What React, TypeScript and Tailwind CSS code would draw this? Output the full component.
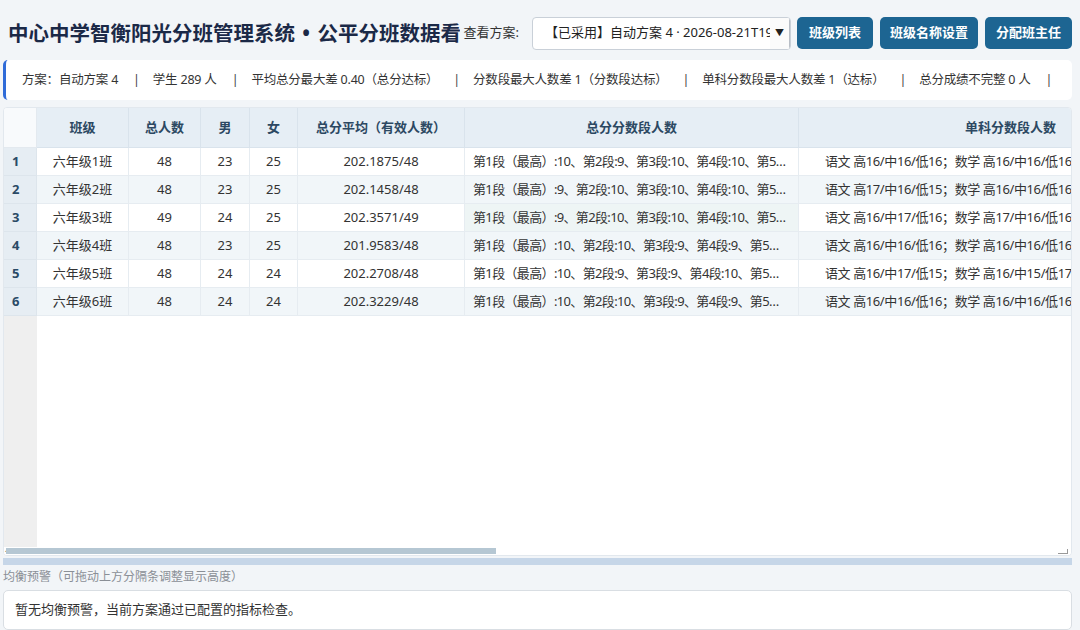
import React from "react";

const rows = [
  ["六年级1班", "48", "23", "25", "202.1875/48", "第1段（最高）:10、第2段:9、第3段:10、第4段:10、第5段:9", "语文 高16/中16/低16；数学 高16/中16/低16"],
  ["六年级2班", "48", "23", "25", "202.1458/48", "第1段（最高）:9、第2段:10、第3段:10、第4段:10、第5段:9", "语文 高17/中16/低15；数学 高16/中16/低16"],
  ["六年级3班", "49", "24", "25", "202.3571/49", "第1段（最高）:9、第2段:10、第3段:10、第4段:10、第5段:10", "语文 高16/中17/低16；数学 高17/中16/低16"],
  ["六年级4班", "48", "23", "25", "201.9583/48", "第1段（最高）:10、第2段:10、第3段:9、第4段:9、第5段:10", "语文 高16/中16/低16；数学 高16/中16/低16"],
  ["六年级5班", "48", "24", "24", "202.2708/48", "第1段（最高）:10、第2段:9、第3段:9、第4段:10、第5段:10", "语文 高16/中17/低15；数学 高16/中15/低17"],
  ["六年级6班", "48", "24", "24", "202.3229/48", "第1段（最高）:10、第2段:10、第3段:9、第4段:9、第5段:10", "语文 高16/中16/低16；数学 高16/中16/低16"],
];

const widths = ["w-[92px]", "w-[72px]", "w-[49px]", "w-[48px]", "w-[167px]", "w-[334px]", "w-[424px]"];
const heads = ["班级", "总人数", "男", "女", "总分平均（有效人数）", "总分分数段人数", "单科分数段人数"];

function Sep() {
  return <span className="ml-[15px] mr-[13px] text-[#444]">|</span>;
}

export default function App() {
  const font = { fontFamily: '"Noto Sans", "Noto Sans CJK SC", sans-serif' };
  return (
    <div className="w-[1080px] h-[630px] overflow-hidden bg-[#f2f5f8] pl-[3px] pr-[8px] flex flex-col" style={font}>
      {/* Header */}
      <div className="flex items-center h-[50px] pt-[17px] pb-[1px] shrink-0">
        <div className="flex-1 min-w-0 overflow-hidden whitespace-nowrap pl-[5px] text-[20.5px] font-bold text-[#1b2947] leading-[32px]">
          中心中学智衡阳光分班管理系统 <span className="mx-[2px]">•</span> 公平分班数据看板
        </div>
        <div className="ml-[4px] text-[13px] text-[#333] whitespace-nowrap">查看方案:</div>
        <div className="ml-[13px] w-[259px] h-[33px] bg-white border border-[#c9d0d8] rounded-[4px] flex items-center pl-[12px] text-[13px] text-[#222] whitespace-nowrap overflow-hidden">
          <span className="flex-1 overflow-hidden">【已采用】自动方案 4 · 2026-08-21T19:59</span>
          <span className="w-[20px] h-full flex items-center justify-center text-[9px] text-[#222] border-r border-[#b8bec6] bg-[#fbfbfb]">▼</span>
        </div>
        <button className="ml-[6px] h-[32px] w-[76px] rounded-[5px] bg-[#1d6592] text-white text-[13px] font-bold">班级列表</button>
        <button className="ml-[7px] h-[32px] w-[98px] rounded-[5px] bg-[#1d6592] text-white text-[13px] font-bold">班级名称设置</button>
        <button className="ml-[7px] h-[32px] w-[87px] rounded-[5px] bg-[#1d6592] text-white text-[13px] font-bold">分配班主任</button>
      </div>

      {/* Stats bar */}
      <div className="mt-[10px] h-[40px] shrink-0 bg-white border-l-[3px] border-[#2f6bd8] rounded-[5px] flex items-center pl-[16px] text-[12.5px] tracking-[-0.2px] text-[#333] whitespace-nowrap overflow-hidden">
        <span>方案：自动方案 4</span>
        <Sep />
        <span>学生 289 人</span>
        <Sep />
        <span>平均总分最大差 0.40（总分达标）</span>
        <Sep />
        <span>分数段最大人数差 1（分数段达标）</span>
        <Sep />
        <span>单科分数段最大人数差 1（达标）</span>
        <Sep />
        <span>总分成绩不完整 0 人</span>
        <Sep />
      </div>

      {/* Table */}
      <div className="mt-[7px] h-[449px] shrink-0 bg-white border border-[#e2e8ee] rounded-[4px] relative overflow-hidden flex flex-col">
        <div className="flex-1 flex overflow-hidden">
          {/* row header column */}
          <div className="w-[33px] shrink-0 flex flex-col">
            <div className="h-[40px] bg-[#f8fafc] border-b border-r border-[#e3e9ef]" />
            {rows.map((_, i) => (
              <div key={i} className="h-[28px] bg-[#e6edf3] border-b border-r border-[#dde5ec] flex items-center pl-[8px] text-[13px] font-bold text-[#2a4a66]">
                {i + 1}
              </div>
            ))}
            <div className="flex-1 bg-[#efefef]" />
          </div>
          <div className="flex-1 overflow-hidden">
            <div className="w-[1200px]">
              <div className="flex h-[40px] bg-[#e6eef5]">
                {heads.map((h, j) => (
                  <div key={j} className={`${widths[j]} shrink-0 border-b border-r border-[#d9e3ec] flex items-center justify-center text-[13px] font-bold text-[#2c4862] whitespace-nowrap`}>
                    {h}
                  </div>
                ))}
              </div>
              {rows.map((r, i) => (
                <div key={i} className={`flex h-[28px] ${i % 2 === 1 ? "bg-[#f1f6f9]" : "bg-white"}`}>
                  {r.map((c, j) => (
                    <div
                      key={j}
                      className={`${widths[j]} shrink-0 border-b border-r border-[#e6ecf1] h-[28px] leading-[27px] text-[13px] text-[#333] whitespace-nowrap overflow-hidden ${
                        j === 6 ? "pl-[26px] text-left tracking-[-0.4px]" : j === 5 ? "px-[8px] text-center truncate tracking-[-0.65px]" : "text-center px-[4px]"
                      } ${i === 2 && j === 5 ? "bg-[#eef5f5]" : ""}`}
                    >
                      {c}
                    </div>
                  ))}
                </div>
              ))}
            </div>
          </div>
        </div>
        {/* scrollbar */}
        <div className="h-[8px] shrink-0 relative bg-white">
          <div className="absolute left-[1px] top-[1px] text-[7px] leading-[6px] text-[#555]">◂</div>
          <div className="absolute left-[2px] top-[1px] h-[6px] w-[490px] bg-[#b5c7d3]" />
          <div className="absolute right-[3px] bottom-[1px] w-[10px] h-[5px] border-r border-b border-[#999]" />
        </div>
      </div>

      {/* splitter */}
      <div className="mt-[2px] h-[7px] shrink-0 bg-[#c6d6e8]" />

      <div className="mt-[4px] text-[12px] text-[#8a8f96] leading-[16px]">均衡预警（可拖动上方分隔条调整显示高度）</div>

      <div className="mt-[5px] flex-1 bg-white border border-[#d9dee3] rounded-[5px] pl-[11px] pt-[9px] text-[13px] text-[#333]">
        暂无均衡预警，当前方案通过已配置的指标检查。
      </div>
    </div>
  );
}
